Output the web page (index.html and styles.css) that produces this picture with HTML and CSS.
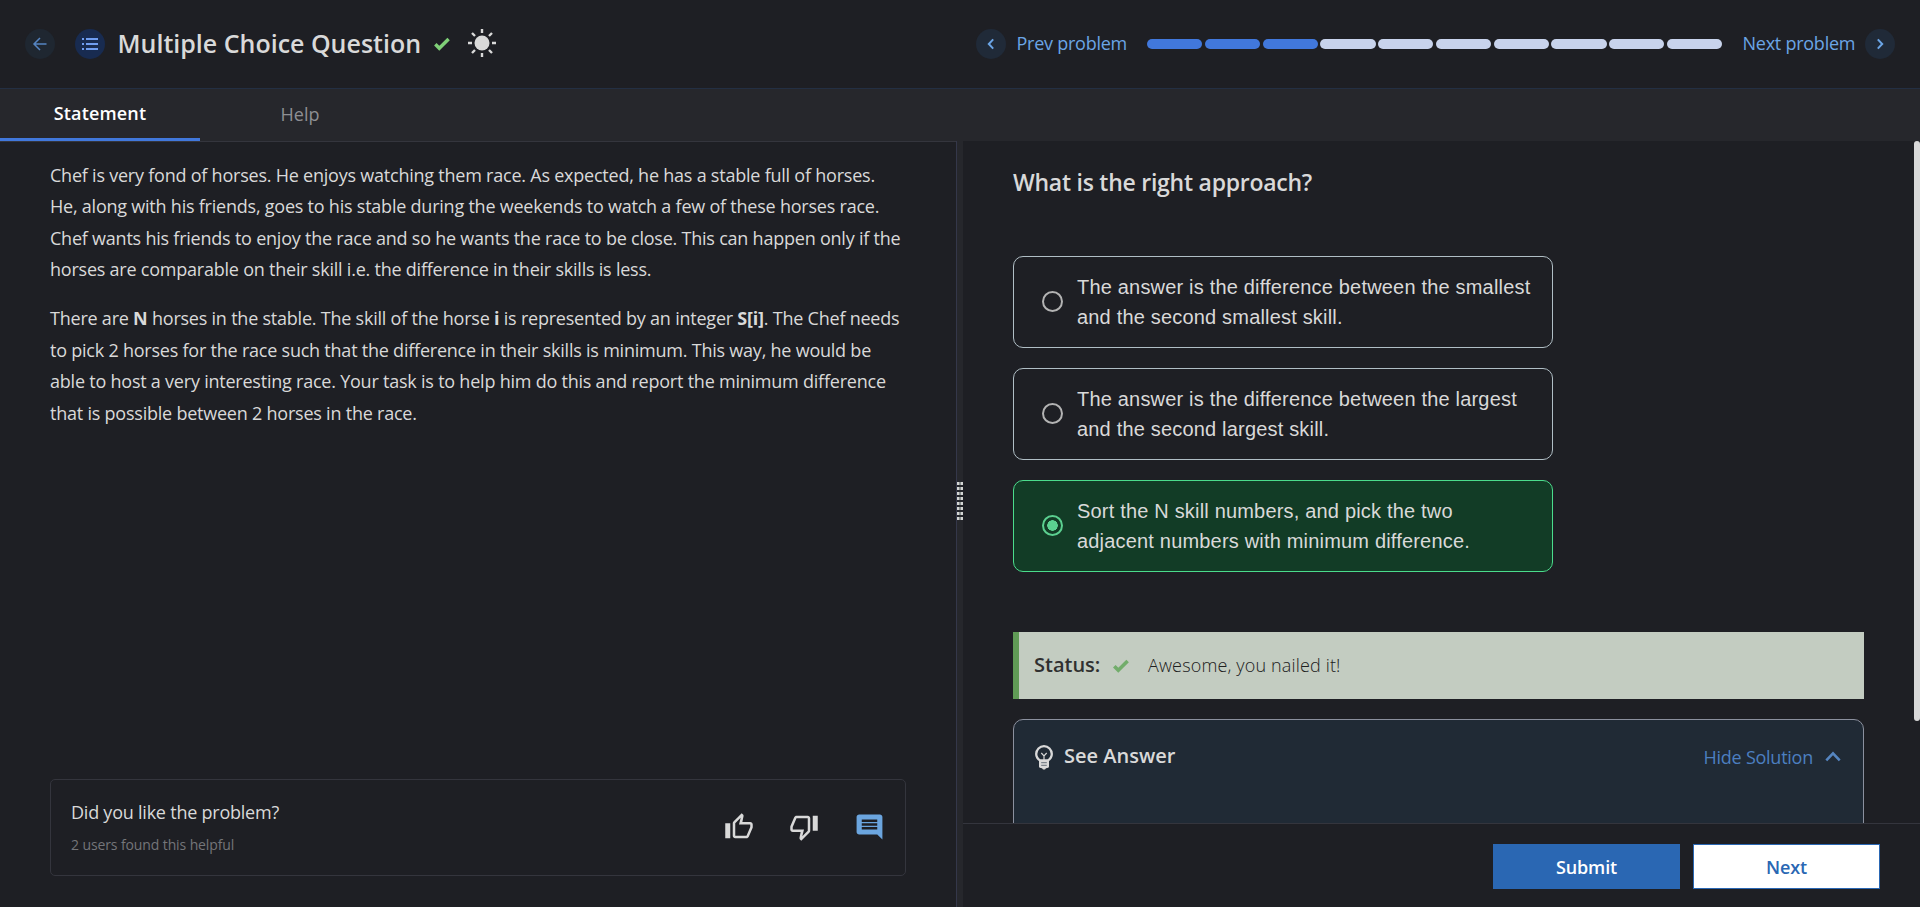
FILE: index.html
```html
<!DOCTYPE html>
<html lang="en">
<head>
<meta charset="utf-8">
<title>Multiple Choice Question</title>
<link rel="stylesheet" href="styles.css">
</head>
<body>
<header class="header">
  <div class="header-left">
    <span class="circle circle-back"><svg width="16" height="16" viewBox="0 0 16 16" fill="none" stroke="#5585c2" stroke-width="1.5"><path d="M14.5 8H2M8 2 2 8l6 6"/></svg></span>
    <span class="circle circle-list"><svg width="16" height="14" viewBox="0 0 16 14" fill="#6f9df0"><path d="M0 1h2v2H0zM0 6h2v2H0zM0 11h2v2H0zM4 1h12v2H4zM4 6h12v2H4zM4 11h12v2H4z"/></svg></span>
    <h1 class="title">Multiple Choice Question</h1>
    <svg class="check" width="16" height="14" viewBox="0 0 16 14" fill="none" stroke="#7fd077" stroke-width="3.4"><path d="M1.3 7.2 5.3 11.3 14.6 2"/></svg>
    <svg class="sun" width="28" height="28" viewBox="0 0 28 28" fill="#d9d9d9" stroke="#d9d9d9"><circle cx="14" cy="14" r="7.5" stroke="none"/><path fill="none" stroke-width="2.4" d="M14 0v4M14 24v4M0 14h4M24 14h4M4 4l3 3M21 21l3 3M4 24l3-3M21 7l3-3"/></svg>
  </div>
  <nav class="problem-nav">
    <span class="circle circle-nav"><svg width="8" height="12" viewBox="0 0 8 12" fill="none" stroke="#6ba5e6" stroke-width="2"><path d="M6.2 1.4 1.8 6l4.4 4.6"/></svg></span>
    <a class="nav-text prev">Prev problem</a>
    <div class="progress"><i class="done"></i><i class="done"></i><i class="done"></i><i></i><i></i><i></i><i></i><i></i><i></i><i></i></div>
    <a class="nav-text next">Next problem</a>
    <span class="circle circle-nav"><svg width="8" height="12" viewBox="0 0 8 12" fill="none" stroke="#6ba5e6" stroke-width="2"><path d="M1.8 1.4 6.2 6l-4.4 4.6"/></svg></span>
  </nav>
</header>
<div class="tabs"><div class="tab active">Statement</div><div class="tab">Help</div></div>
<main class="main">
  <section class="left">
    <div class="statement">
      <p>Chef is very fond of horses. He enjoys watching them race. As expected, he has a stable full of horses.<br>He, along with his friends, goes to his stable during the weekends to watch a few of these horses race.<br>Chef wants his friends to enjoy the race and so he wants the race to be close. This can happen only if the<br>horses are comparable on their skill i.e. the difference in their skills is less.</p>
      <p>There are <b>N</b> horses in the stable. The skill of the horse <b>i</b> is represented by an integer <b>S[i]</b>. The Chef needs<br>to pick 2 horses for the race such that the difference in their skills is minimum. This way, he would be<br>able to host a very interesting race. Your task is to help him do this and report the minimum difference<br>that is possible between 2 horses in the race.</p>
    </div>
    <div class="feedback">
      <div class="feedback-text"><div class="question">Did you like the problem?</div><div class="helpful">2 users found this helpful</div></div>
      <div class="feedback-icons">
        <svg width="30" height="30" viewBox="0 0 24 24" fill="#d9d9d9"><path d="M9 21h9c.83 0 1.54-.5 1.84-1.22l3.02-7.05c.09-.23.14-.47.14-.73v-2c0-1.100-.9-2-2-2h-6.310l.95-4.570.03-.32c0-.41-.17-.79-.44-1.060L14.170 1 7.580 7.590C7.220 7.950 7 8.450 7 9v10c0 1.100.9 2 2 2zM9 9l4.340-4.340L12 10h9v2l-3 7H9V9zM1 9h4v12H1z"/></svg>
        <svg width="30" height="30" viewBox="0 0 24 24" fill="#d9d9d9"><path d="M15 3H6c-.83 0-1.540.5-1.840 1.220l-3.020 7.050c-.09.23-.14.47-.14.73v2c0 1.100.9 2 2 2h6.310l-.95 4.570-.03.32c0 .41.17.79.44 1.060L9.830 23l6.590-6.590c.36-.36.58-.86.58-1.410V5c0-1.100-.9-2-2-2zm0 12l-4.340 4.340L12 14H3v-2l3-7h9v10zm4-12h4v12h-4z"/></svg>
        <svg width="31" height="30" viewBox="0 0 24 24" preserveAspectRatio="none" fill="#6ba5df"><path d="M21.990 4c0-1.100-.89-2-1.990-2H4c-1.100 0-2 .9-2 2v12c0 1.100.9 2 2 2h14l4 4-.010-18zM18 14H6v-2h12v2zm0-3H6V9h12v2zm0-3H6V6h12v2z"/></svg>
      </div>
    </div>
  </section>
  <div class="divider"><span class="grip"></span></div>
  <section class="right">
    <div class="content">
      <h2 class="prompt">What is the right approach?</h2>
      <div class="options">
        <div class="option"><span class="radio"></span><span class="option-text">The answer is the difference between the smallest<br>and the second smallest skill.</span></div>
        <div class="option"><span class="radio"></span><span class="option-text">The answer is the difference between the largest<br>and the second largest skill.</span></div>
        <div class="option correct"><span class="radio"></span><span class="option-text">Sort the N skill numbers, and pick the two<br>adjacent numbers with minimum difference.</span></div>
      </div>
      <div class="status"><span class="status-label">Status:</span><svg class="status-check" width="16" height="14" viewBox="0 0 16 14" fill="none" stroke="#72ad6b" stroke-width="3.6"><path d="M1.300 7.200 5.300 11.300 14.600 2"/></svg><span class="status-msg">Awesome, you nailed it!</span></div>
      <div class="answer">
        <svg class="bulb" width="18" height="25" viewBox="0 0 18 25" fill="none" stroke="#d9d9d9"><path stroke-width="2.300" d="M5.200 15.500C2.600 13.900 1.200 11.800 1.200 9a7.800 7.800 0 0 1 15.600 0c0 2.800-1.400 4.900-4 6.500z"/><path stroke-width="1.200" d="M6.300 8 9 10.800 11.700 8M9 10.800V15"/><path fill="#d9d9d9" stroke="none" d="M4 15h10v6.500c0 1-1.200 1.700-3 1.700L10 24.500H8L7 23.200c-1.800 0-3-.7-3-1.700z"/><path stroke="#67707a" stroke-width="1" d="M6.200 17.700h5.600M6.200 20.300h5.600"/></svg>
        <span class="answer-title">See Answer</span>
        <span class="hide">Hide Solution</span>
        <svg class="chevron" width="16" height="11" viewBox="0 0 16 11" fill="none" stroke="#5585c0" stroke-width="2.600"><path d="M1.300 9.300 8 2.300l6.700 7"/></svg>
      </div>
    </div>
    <span class="scrollbar"></span>
    <footer class="footer"><button class="btn submit">Submit</button><button class="btn next-btn">Next</button></footer>
  </section>
</main>
</body>
</html>
```
FILE: styles.css
```css
* { box-sizing: border-box; }
body { margin: 0; height: 907px; overflow: hidden; display: flex; flex-direction: column; background: #1e1f24; color: #d9d9d9; font: 18px "Open Sans", sans-serif; }
svg { display: block; flex: none; }
h1, h2, p { margin: 0; }
.header { height: 89px; flex: none; display: flex; justify-content: space-between; align-items: center; padding: 0 25px; border-bottom: 1px solid #232f43; white-space: nowrap; }
.header-left, .problem-nav { display: flex; align-items: center; }
.circle { width: 30px; height: 30px; border-radius: 50%; display: flex; align-items: center; justify-content: center; flex: none; }
.circle-back { background: #1f2731; }
.circle-list { background: #182b50; margin-left: 20px; }
.circle-nav { background: #202a38; }
.title { font-size: 25px; font-weight: 600; line-height: 34px; width: 316.500px; margin: -2px 0 0 12.500px; }
.sun { margin-left: 18px; margin-top: -2px; }
.nav-text { color: #6ba5e6; line-height: 24px; letter-spacing: -0.250px; margin-top: -2px; }
.prev { width: 130.500px; margin-left: 10.500px; }
.next { width: 122.500px; margin-left: 20.500px; }
.progress { width: 575px; display: flex; gap: 2.500px; }
.progress i { flex: 1; height: 10px; border-radius: 5px; background: #c8d3ec; }
.progress .done { background: #4178dc; }
.tabs { height: 52px; flex: none; display: flex; background: #26272c; }
.tab { width: 200px; height: 53px; line-height: 51px; text-align: center; color: #8e8f93; }
.tab.active { color: #fff; font-weight: 600; height: 52px; line-height: 48px; letter-spacing: 0.150px; border-bottom: 3px solid #4178dc; }
.main { flex: 1; display: flex; min-height: 0; }
.left { width: 956px; border-top: 1px solid #34353d; display: flex; flex-direction: column; justify-content: space-between; padding: 17.500px 50px 31px; }
.statement { line-height: 31.500px; white-space: nowrap; letter-spacing: -0.225px; }
.statement p + p { margin-top: 17.500px; }
.statement b { font-weight: 700; }
.feedback { height: 97px; border: 1px solid #34353d; border-radius: 5px; display: flex; justify-content: space-between; align-items: center; padding: 0 20px; }
.question { line-height: 26px; letter-spacing: -0.230px; }
.helpful { font-size: 14px; line-height: 20px; margin-top: 10px; color: #747579; letter-spacing: -0.110px; }
.feedback-text { margin-top: -1px; }
.feedback-icons { display: flex; gap: 35px; margin-top: -1px; }
.divider { width: 7px; background: #26272c; border-left: 1px solid #34374a; display: flex; align-items: center; }
.grip { width: 6px; height: 38px; margin-top: -46px; background: linear-gradient(90deg, #d4d5d4 2px, #8a8f8e 2px 4px, #d4d5d4 4px); -webkit-mask: repeating-linear-gradient(#000 0 3px, transparent 3px 5px); mask: repeating-linear-gradient(#000 0 3px, transparent 3px 5px); }
.right { flex: 1; position: relative; display: flex; flex-direction: column; }
.content { height: 682px; overflow: hidden; padding: 24px 56px 0 50px; }
.prompt { font-size: 23px; font-weight: 600; line-height: 34px; white-space: nowrap; letter-spacing: -0.250px; }
.options { width: 540px; display: flex; flex-direction: column; gap: 20px; margin-top: 57px; font: 20px/30px "Liberation Sans", Arial, sans-serif; white-space: nowrap; letter-spacing: 0.185px; }
.option { height: 92px; border: 1px solid #b0bec5; border-radius: 10px; display: flex; align-items: center; gap: 14px; padding: 0 0 1px 28px; }
.radio { width: 21px; height: 21px; border: 2px solid #b3b3b3; border-radius: 50%; flex: none; }
.correct { background: #123c26; border-color: #4bdc8c; }
.correct .radio { border-color: #5bd090; background: radial-gradient(circle, #5bd090 5px, transparent 5.500px); }
.status { height: 67px; margin-top: 60px; border-left: 6px solid #609b56; background: #c3ccc1; color: #303030; display: flex; align-items: center; padding-left: 15px; }
.status-label { font-size: 20px; font-weight: 600; width: 79px; margin-top: -2px; white-space: nowrap; }
.status-msg { margin: -1px 0 0 19px; font-weight: 300; letter-spacing: 0.150px; color: #202020; }
.answer { height: 150px; margin-top: 20px; border: 1px solid #8b909e; border-radius: 10px; background: #202a35; display: flex; align-items: flex-start; padding: 26px 22px 0 21px; }
.bulb { margin-top: -1px; }
.answer-title { font-size: 20px; font-weight: 600; line-height: 24px; margin: -2px auto 0 11px; }
.hide { color: #4c7fc0; line-height: 24px; margin: -1px 12px 0 0; letter-spacing: -0.250px; }
.chevron { margin-top: 5px; }
.scrollbar { position: absolute; top: 0; right: 0; width: 6px; height: 580px; border-radius: 3px; background: #d9d9d9; }
.footer { flex: 1; border-top: 1px solid #34353d; display: flex; gap: 13px; justify-content: flex-end; padding: 20px 40px 0 0; }
.btn { width: 187px; height: 45px; border: 1px solid #2a67b3; font: 600 18px "Open Sans", sans-serif; padding: 1px 0 0; letter-spacing: -0.150px; }
.submit { background: #2a67b3; color: #fff; }
.next-btn { background: #fff; color: #2a67b3; }
```
